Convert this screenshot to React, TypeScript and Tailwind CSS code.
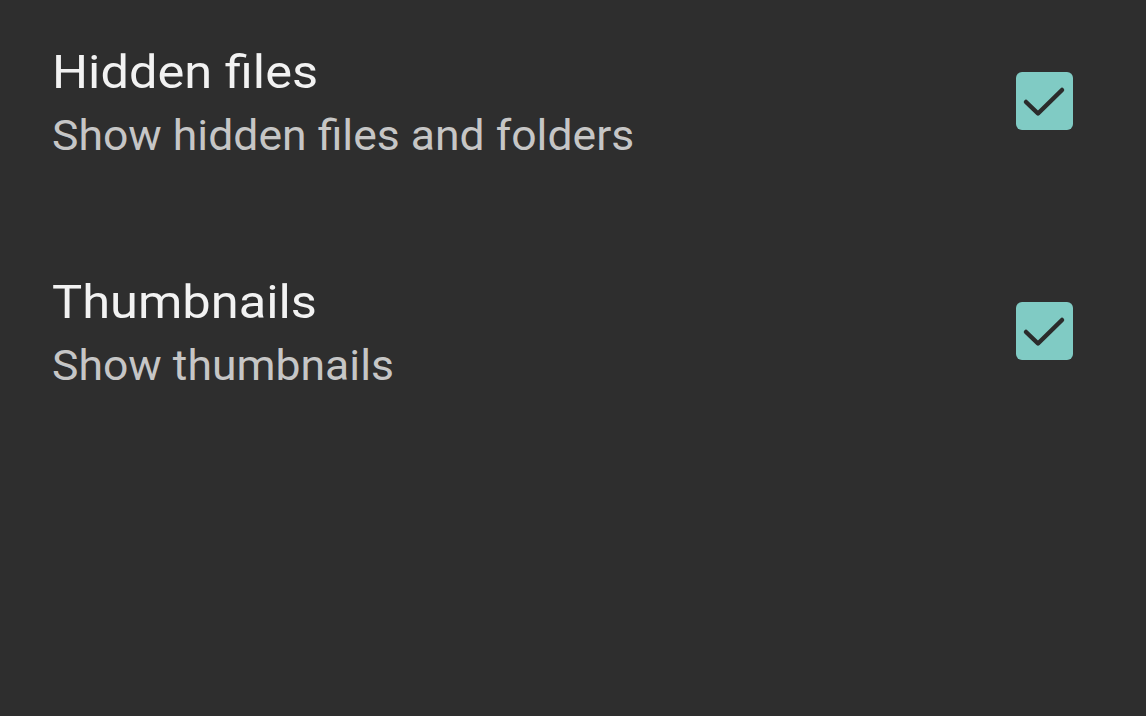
function Check() {
  return (
    <div className="mt-[28px] w-[57px] h-[58px] rounded-[6px] bg-[#80cbc4] shrink-0">
      <svg width="57" height="58" viewBox="0 0 57 58" fill="none">
        <path d="M10 30l12 11.5L46 18" stroke="#2b2b2b" strokeWidth="4.5" strokeLinecap="round" strokeLinejoin="round" />
      </svg>
    </div>
  )
}

const rows = [
  { title: 'Hidden files', sub: 'Show hidden files and folders' },
  { title: 'Thumbnails', sub: 'Show thumbnails' },
]

export default function App() {
  return (
    <div className="w-[1146px] h-[716px] bg-[#2e2e2e] overflow-hidden font-['Roboto',sans-serif]">
      <div className="flex flex-col gap-[110px] pt-[44px] pl-[52px] pr-[73px]">
        {rows.map((r) => (
          <div key={r.title} className="flex items-start justify-between">
            <div className="flex flex-col items-start">
              <span className="inline-block origin-left scale-x-[1.1] text-[46px] leading-[56px] text-[#f2f2f2]">{r.title}</span>
              <span className="inline-block origin-left scale-x-[1.06] mt-[8px] text-[42px] leading-[56px] text-[#c6c6c6]">{r.sub}</span>
            </div>
            <Check />
          </div>
        ))}
      </div>
    </div>
  )
}
